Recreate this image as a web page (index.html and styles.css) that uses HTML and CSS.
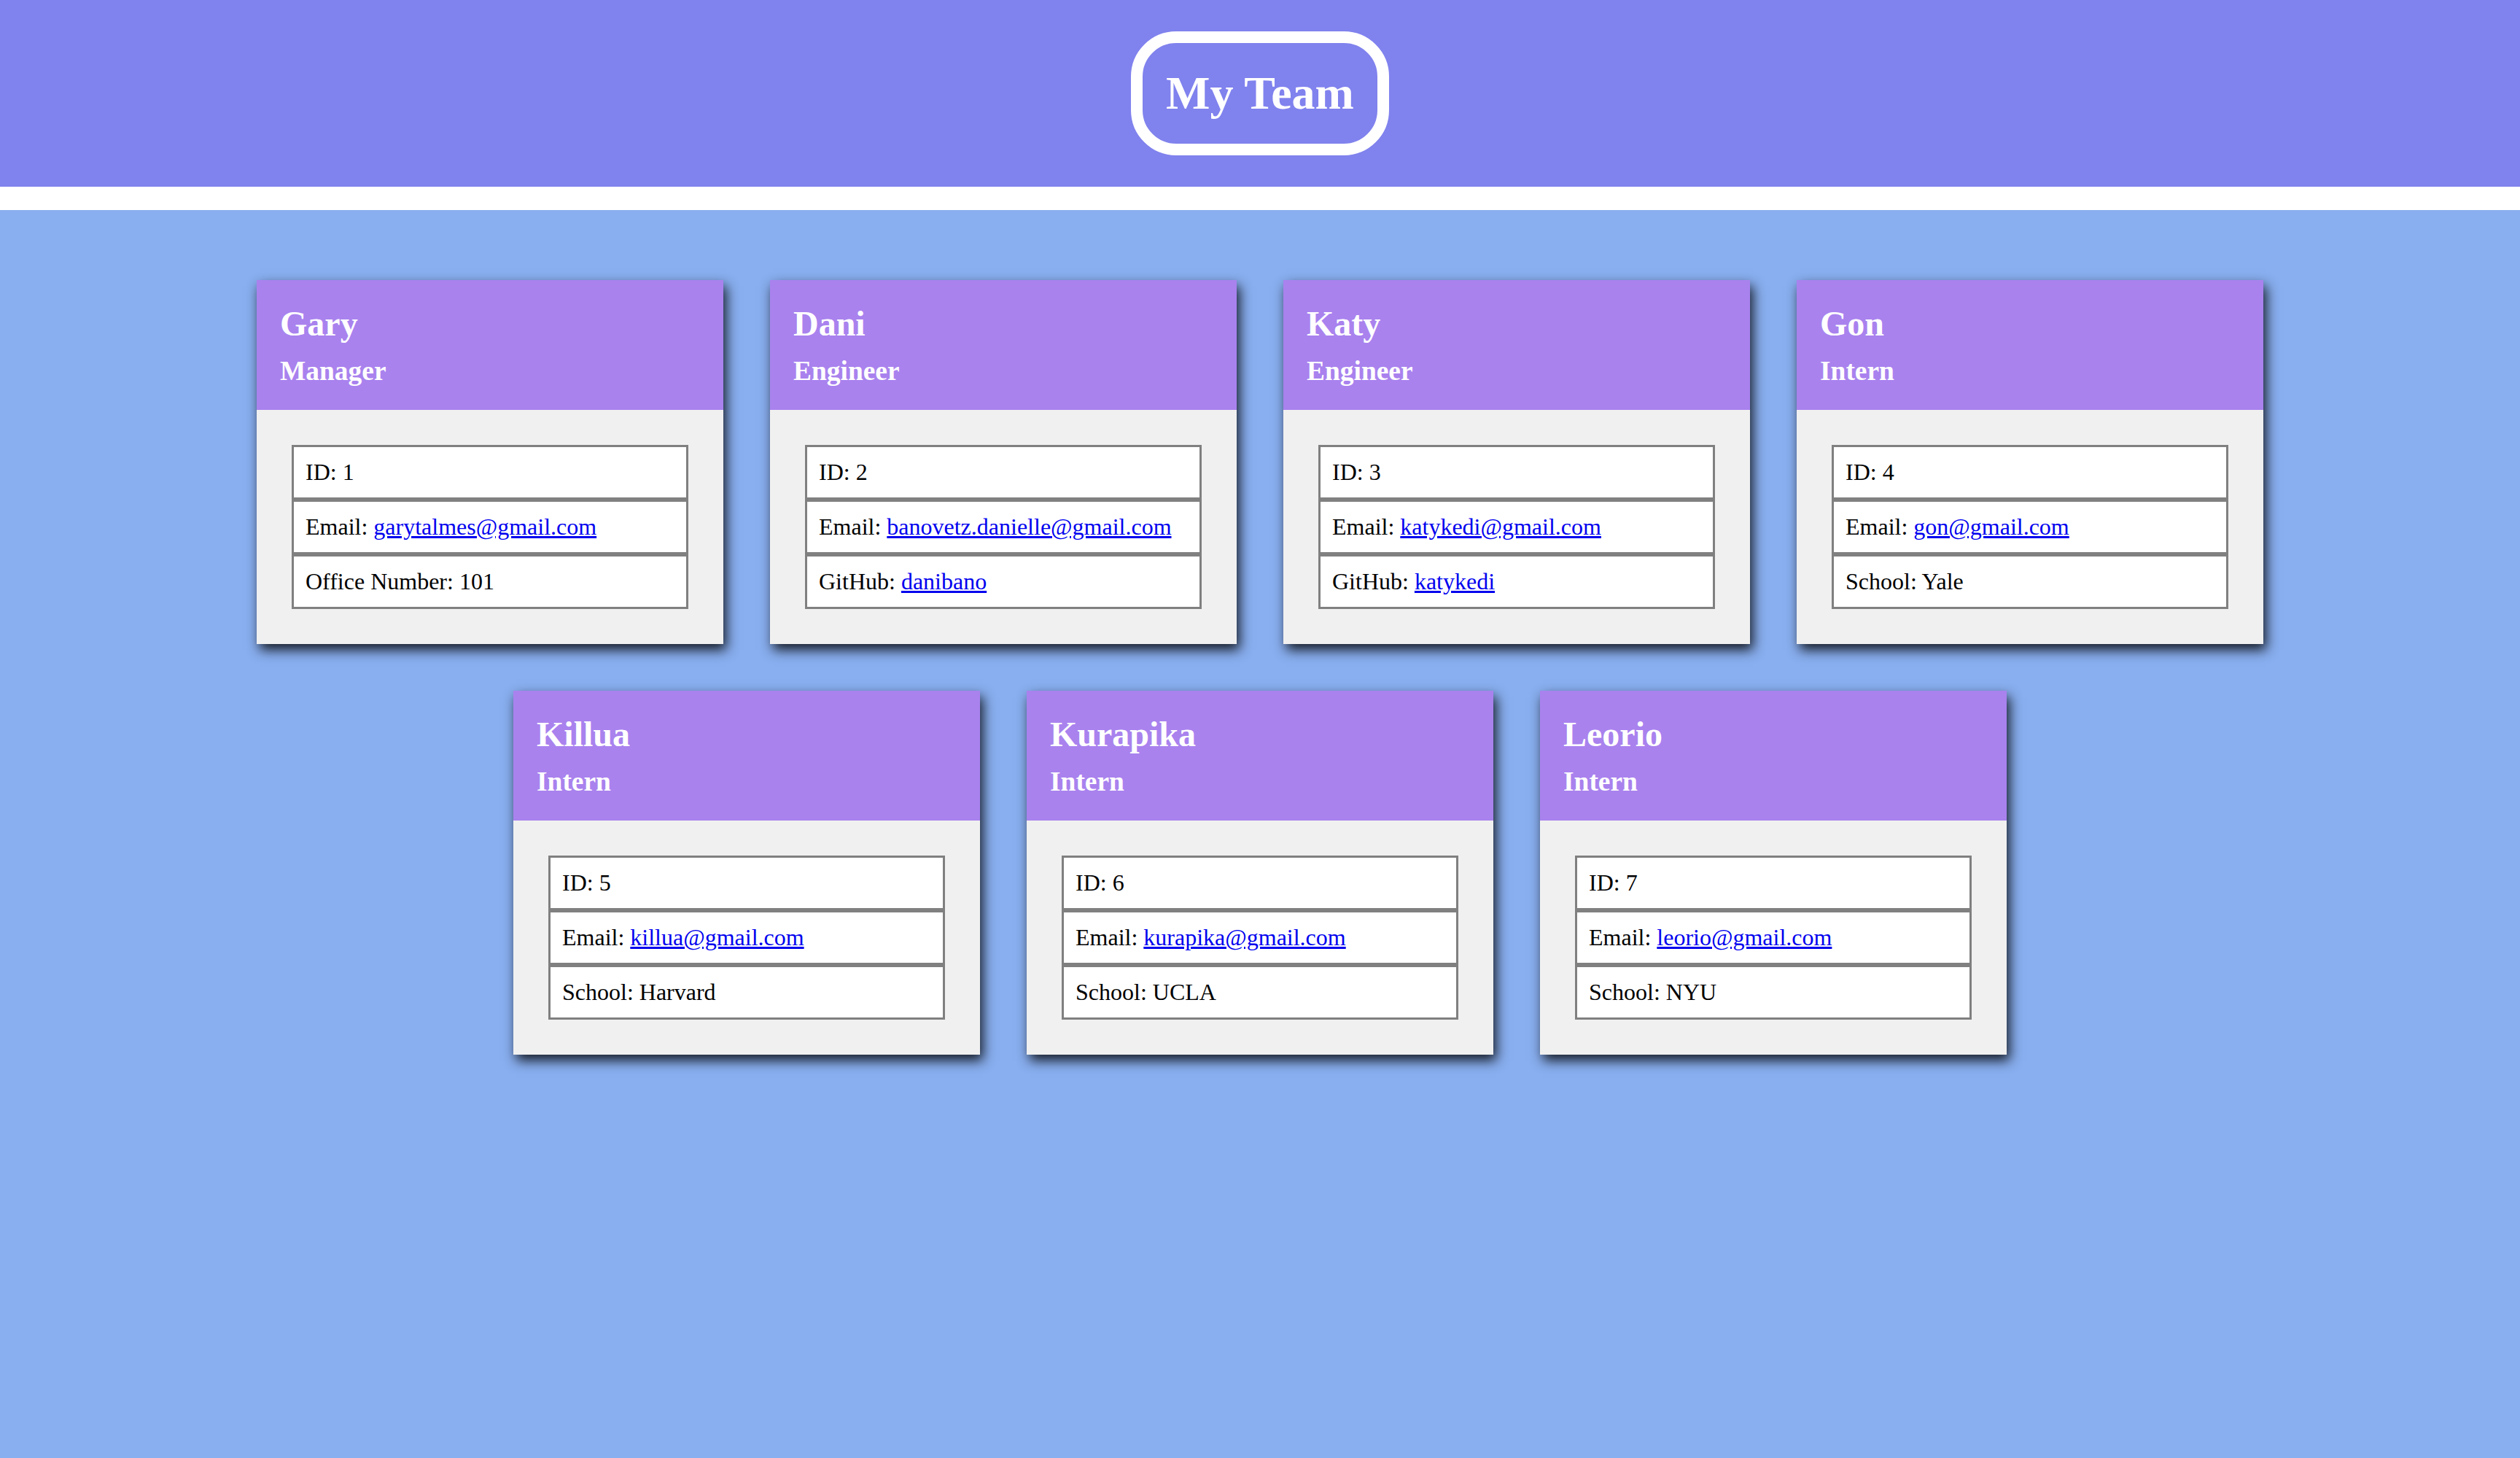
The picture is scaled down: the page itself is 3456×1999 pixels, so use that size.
FILE: index.html
```html
<!DOCTYPE html>
<html lang="en">
<head>
<meta charset="UTF-8">
<title>My Team</title>
<link rel="stylesheet" href="styles.css">
</head>
<body>
<header class="site-header">
  <h1 class="site-title">My Team</h1>
</header>
<main class="team">
  <div class="card">
    <div class="card-header"><h2 class="card-name">Gary</h2><h3 class="card-role">Manager</h3></div>
    <div class="card-body"><ul class="info-list">
      <li class="info-item">ID: 1</li>
      <li class="info-item">Email: <a href="mailto:garytalmes@gmail.com">garytalmes@gmail.com</a></li>
      <li class="info-item">Office Number: 101</li>
    </ul></div>
  </div>
  <div class="card">
    <div class="card-header"><h2 class="card-name">Dani</h2><h3 class="card-role">Engineer</h3></div>
    <div class="card-body"><ul class="info-list">
      <li class="info-item">ID: 2</li>
      <li class="info-item">Email: <a href="mailto:banovetz.danielle@gmail.com">banovetz.danielle@gmail.com</a></li>
      <li class="info-item">GitHub: <a href="#">danibano</a></li>
    </ul></div>
  </div>
  <div class="card">
    <div class="card-header"><h2 class="card-name">Katy</h2><h3 class="card-role">Engineer</h3></div>
    <div class="card-body"><ul class="info-list">
      <li class="info-item">ID: 3</li>
      <li class="info-item">Email: <a href="mailto:katykedi@gmail.com">katykedi@gmail.com</a></li>
      <li class="info-item">GitHub: <a href="#">katykedi</a></li>
    </ul></div>
  </div>
  <div class="card">
    <div class="card-header"><h2 class="card-name">Gon</h2><h3 class="card-role">Intern</h3></div>
    <div class="card-body"><ul class="info-list">
      <li class="info-item">ID: 4</li>
      <li class="info-item">Email: <a href="mailto:gon@gmail.com">gon@gmail.com</a></li>
      <li class="info-item">School: Yale</li>
    </ul></div>
  </div>
  <div class="card">
    <div class="card-header"><h2 class="card-name">Killua</h2><h3 class="card-role">Intern</h3></div>
    <div class="card-body"><ul class="info-list">
      <li class="info-item">ID: 5</li>
      <li class="info-item">Email: <a href="mailto:killua@gmail.com">killua@gmail.com</a></li>
      <li class="info-item">School: Harvard</li>
    </ul></div>
  </div>
  <div class="card">
    <div class="card-header"><h2 class="card-name">Kurapika</h2><h3 class="card-role">Intern</h3></div>
    <div class="card-body"><ul class="info-list">
      <li class="info-item">ID: 6</li>
      <li class="info-item">Email: <a href="mailto:kurapika@gmail.com">kurapika@gmail.com</a></li>
      <li class="info-item">School: UCLA</li>
    </ul></div>
  </div>
  <div class="card">
    <div class="card-header"><h2 class="card-name">Leorio</h2><h3 class="card-role">Intern</h3></div>
    <div class="card-body"><ul class="info-list">
      <li class="info-item">ID: 7</li>
      <li class="info-item">Email: <a href="mailto:leorio@gmail.com">leorio@gmail.com</a></li>
      <li class="info-item">School: NYU</li>
    </ul></div>
  </div>
</main>
</body>
</html>
```
FILE: styles.css
```css
html, body {
  margin: 0;
  padding: 0;
}
body {
  min-height: 100vh;
  background: #89aff0;
  font-family: "Liberation Serif", "Times New Roman", serif;
  font-size: 32px;
  color: #000;
}
.site-header {
  background: #8082ee;
  text-align: center;
  border-bottom: 32px solid #fff;
}
.site-title {
  display: inline-block;
  margin: 43px 0;
  padding: 32px;
  border: 16px solid #fff;
  border-radius: 62px;
  color: #fff;
  font-size: 64px;
  font-weight: bold;
  line-height: normal;
}
.team {
  max-width: 2816px;
  margin: 0 auto;
  padding: 96px 0;
  display: flex;
  flex-wrap: wrap;
  justify-content: center;
  gap: 64px;
}
.card {
  width: 640px;
  background: #f0f0f0;
  box-shadow: 4px 8px 16px rgba(0, 0, 0, 0.85);
}
.card-header {
  background: #a982ee;
  color: #fff;
  padding: 32px;
}
.card-name {
  margin: 0 0 16px;
  font-size: 48px;
  font-weight: bold;
  line-height: normal;
}
.card-role {
  margin: 0;
  font-size: 37.44px;
  font-weight: bold;
  line-height: normal;
}
.card-body {
  padding: 48px;
}
.info-list {
  list-style: none;
  margin: 0;
  padding: 0;
}
.info-item {
  background: #fff;
  border: 3px solid #808080;
  padding: 16px;
  line-height: normal;
}
.info-item a {
  color: #0000ee;
  text-decoration: underline;
}
```
